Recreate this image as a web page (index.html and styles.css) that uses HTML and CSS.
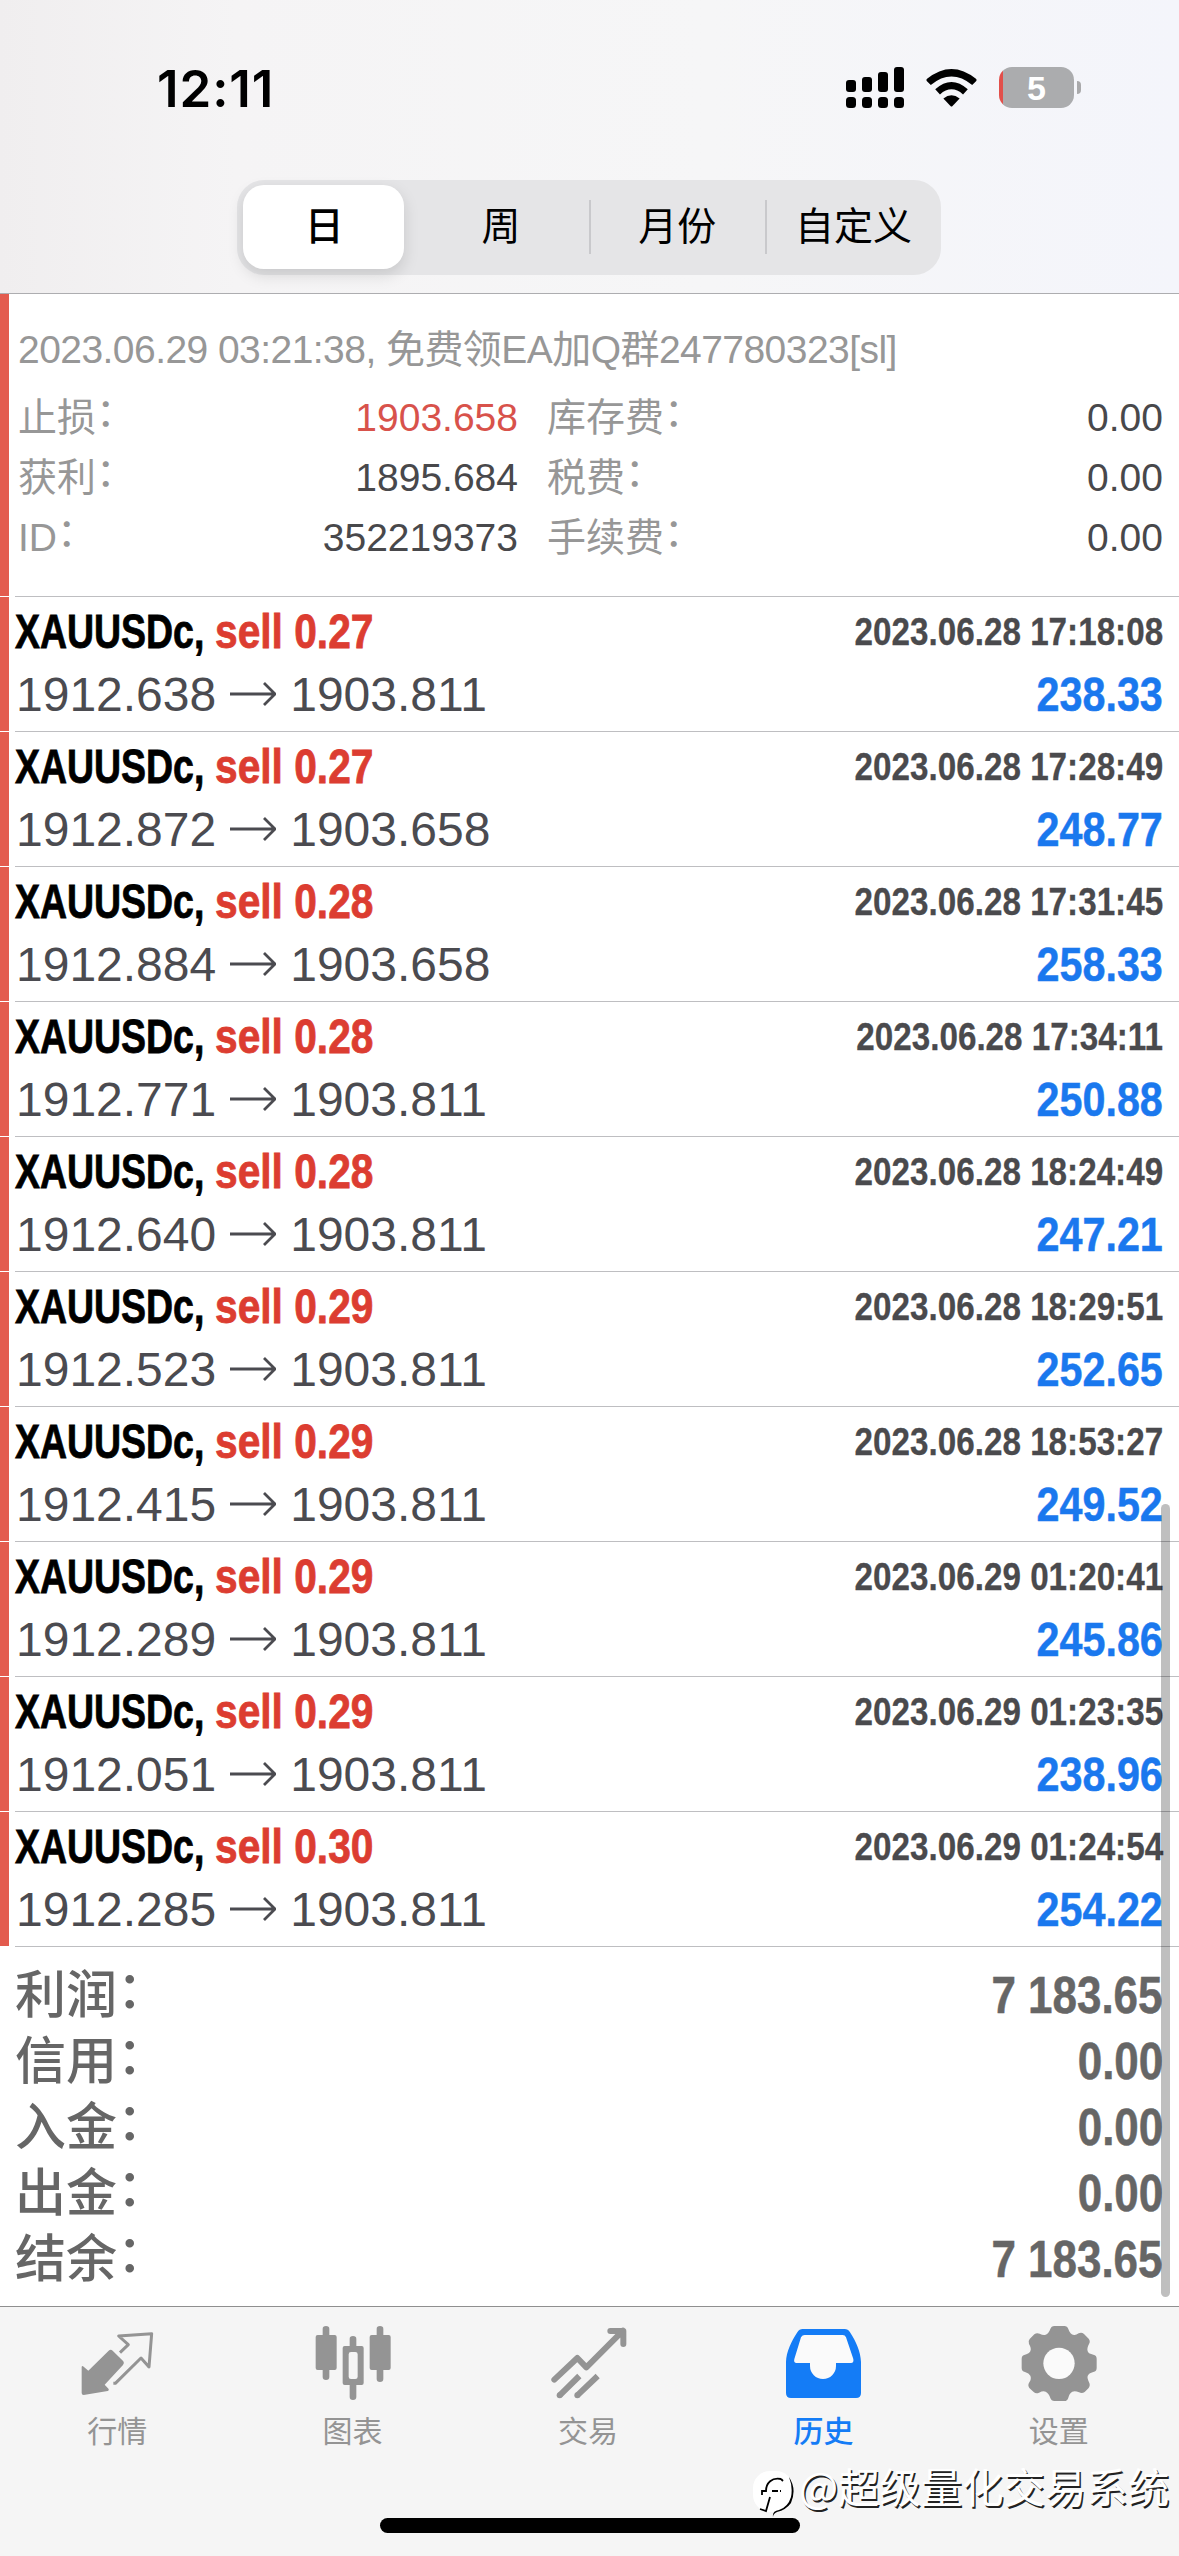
FILE: index.html
```html
<!DOCTYPE html>
<html lang="zh-CN">
<head>
<meta charset="utf-8">
<title>历史</title>
<link rel="stylesheet" href="styles.css">
</head>
<body>
<div class="screen">
  <header class="top">
    <div class="status">
      <div class="clock">12:11</div>
      <div class="status-icons">
        <svg class="signal" viewBox="0 0 58 41"><g><rect x="0" y="13" width="10" height="12" rx="3"/><rect x="16" y="10" width="10" height="15" rx="3"/><rect x="32" y="5" width="10" height="20" rx="3"/><rect x="48" y="0" width="10" height="25" rx="3"/><rect x="0" y="30" width="10" height="11" rx="3.5"/><rect x="16" y="30" width="10" height="11" rx="3.5"/><rect x="32" y="30" width="10" height="11" rx="3.5"/><rect x="48" y="30" width="10" height="11" rx="3.5"/></g></svg>
        <svg class="wifi" viewBox="0 0 150 112"><path d="M2 35Q0 32 3 29Q75 -29 147 29Q150 32 148 35L136 47Q75 -3 14 47Z"/><path d="M27 60Q75 17 123 60L109 75Q75 45 41 75Z"/><path d="M51 87Q75 68 99 87L78 109Q75 112 72 109Z"/></svg>
        <div class="battery"><span class="battery-body">5</span><span class="battery-tip"></span></div>
      </div>
    </div>
    <nav class="segments">
      <div class="segment selected">日</div>
      <div class="segment">周</div>
      <div class="segment divided">月份</div>
      <div class="segment divided">自定义</div>
    </nav>
  </header>

  <main class="content">
    <section class="detail">
      <div class="detail-title">2023.06.29 03:21:38, 免费领EA加Q群247780323[sl]</div>
      <div class="detail-grid">
        <span>止损<i class="colon">：</i></span><b class="loss">1903.658</b><span class="second">库存费<i class="colon">：</i></span><b>0.00</b>
        <span>获利<i class="colon">：</i></span><b>1895.684</b><span class="second">税费<i class="colon">：</i></span><b>0.00</b>
        <span>ID<i class="colon">：</i></span><b>352219373</b><span class="second">手续费<i class="colon">：</i></span><b>0.00</b>
      </div>
    </section>

    <article class="deal"><div class="line"><span class="symbol"><span>XAUUSDc,</span></span><span class="side">sell 0.27</span><time>2023.06.28 17:18:08</time></div><div class="line"><span class="price">1912.638</span><svg class="arrow" viewBox="0 0 46 24"><path d="M0 12H45M34 1L45 12L34 23"/></svg><span class="price">1903.811</span><span class="profit">238.33</span></div></article>
    <article class="deal"><div class="line"><span class="symbol"><span>XAUUSDc,</span></span><span class="side">sell 0.27</span><time>2023.06.28 17:28:49</time></div><div class="line"><span class="price">1912.872</span><svg class="arrow" viewBox="0 0 46 24"><path d="M0 12H45M34 1L45 12L34 23"/></svg><span class="price">1903.658</span><span class="profit">248.77</span></div></article>
    <article class="deal"><div class="line"><span class="symbol"><span>XAUUSDc,</span></span><span class="side">sell 0.28</span><time>2023.06.28 17:31:45</time></div><div class="line"><span class="price">1912.884</span><svg class="arrow" viewBox="0 0 46 24"><path d="M0 12H45M34 1L45 12L34 23"/></svg><span class="price">1903.658</span><span class="profit">258.33</span></div></article>
    <article class="deal"><div class="line"><span class="symbol"><span>XAUUSDc,</span></span><span class="side">sell 0.28</span><time>2023.06.28 17:34:11</time></div><div class="line"><span class="price">1912.771</span><svg class="arrow" viewBox="0 0 46 24"><path d="M0 12H45M34 1L45 12L34 23"/></svg><span class="price">1903.811</span><span class="profit">250.88</span></div></article>
    <article class="deal"><div class="line"><span class="symbol"><span>XAUUSDc,</span></span><span class="side">sell 0.28</span><time>2023.06.28 18:24:49</time></div><div class="line"><span class="price">1912.640</span><svg class="arrow" viewBox="0 0 46 24"><path d="M0 12H45M34 1L45 12L34 23"/></svg><span class="price">1903.811</span><span class="profit">247.21</span></div></article>
    <article class="deal"><div class="line"><span class="symbol"><span>XAUUSDc,</span></span><span class="side">sell 0.29</span><time>2023.06.28 18:29:51</time></div><div class="line"><span class="price">1912.523</span><svg class="arrow" viewBox="0 0 46 24"><path d="M0 12H45M34 1L45 12L34 23"/></svg><span class="price">1903.811</span><span class="profit">252.65</span></div></article>
    <article class="deal"><div class="line"><span class="symbol"><span>XAUUSDc,</span></span><span class="side">sell 0.29</span><time>2023.06.28 18:53:27</time></div><div class="line"><span class="price">1912.415</span><svg class="arrow" viewBox="0 0 46 24"><path d="M0 12H45M34 1L45 12L34 23"/></svg><span class="price">1903.811</span><span class="profit">249.52</span></div></article>
    <article class="deal"><div class="line"><span class="symbol"><span>XAUUSDc,</span></span><span class="side">sell 0.29</span><time>2023.06.29 01:20:41</time></div><div class="line"><span class="price">1912.289</span><svg class="arrow" viewBox="0 0 46 24"><path d="M0 12H45M34 1L45 12L34 23"/></svg><span class="price">1903.811</span><span class="profit">245.86</span></div></article>
    <article class="deal"><div class="line"><span class="symbol"><span>XAUUSDc,</span></span><span class="side">sell 0.29</span><time>2023.06.29 01:23:35</time></div><div class="line"><span class="price">1912.051</span><svg class="arrow" viewBox="0 0 46 24"><path d="M0 12H45M34 1L45 12L34 23"/></svg><span class="price">1903.811</span><span class="profit">238.96</span></div></article>
    <article class="deal"><div class="line"><span class="symbol"><span>XAUUSDc,</span></span><span class="side">sell 0.30</span><time>2023.06.29 01:24:54</time></div><div class="line"><span class="price">1912.285</span><svg class="arrow" viewBox="0 0 46 24"><path d="M0 12H45M34 1L45 12L34 23"/></svg><span class="price">1903.811</span><span class="profit">254.22</span></div></article>

    <section class="summary">
      <div><span>利润<i class="colon">：</i></span><b>7 183.65</b></div>
      <div><span>信用<i class="colon">：</i></span><b>0.00</b></div>
      <div><span>入金<i class="colon">：</i></span><b>0.00</b></div>
      <div><span>出金<i class="colon">：</i></span><b>0.00</b></div>
      <div><span>结余<i class="colon">：</i></span><b>7 183.65</b></div>
    </section>
    <div class="scrollbar"></div>
  </main>

  <footer class="tabbar">
    <nav class="tabs">
      <a class="tab"><svg viewBox="53 66 240 240"><path d="M145 152Q151 147 157 152L189 184Q193 189 188 195L133 254L145 267Q147 271 142 273L70 285Q64 285 64 279V201Q65 196 70 200L84 212Z"/><path class="stroke" stroke-width="9" stroke-linejoin="round" d="M179 158L204 134L175 108L274 101L266 201L242 174L165 250H159"/></svg><span>行情</span></a>
      <a class="tab"><svg viewBox="757 66 240 240"><path d="M786 86a10 8 0 0 1 20 0V105H822Q828 105 828 111V204Q828 210 822 210H806V231a10 9 0 0 1-20 0V210H771Q765 210 765 204V111Q765 105 771 105H786ZM948 86a10 8 0 0 1 20 0V105H984Q990 105 990 111V204Q990 210 984 210H968V237a10 9 0 0 1-20 0V210H933Q927 210 927 204V111Q927 105 933 105H948Z"/><path fill-rule="evenodd" d="M867 116a10 8 0 0 1 20 0V138H903Q909 138 909 144V249Q909 255 903 255H887V291a10 9 0 0 1-20 0V255H852Q846 255 846 249V144Q846 138 852 138H867ZM871 156Q864 156 864 163V230Q864 237 871 237H884Q891 237 891 230V163Q891 156 884 156Z"/></svg><span>图表</span></a>
      <a class="tab"><svg viewBox="56 66 240 240"><path class="stroke" stroke-width="18" stroke-linejoin="round" stroke-linecap="round" d="M72 239L141 174L168 202L278 92M240 93H279V132"/><path class="stroke" stroke-width="18" d="M88 286L147 228M141 286L202 228"/><circle cx="88" cy="286" r="9"/><circle cx="141" cy="286" r="9"/></svg><span>交易</span></a>
      <a class="tab active"><svg viewBox="762 66 240 240"><path d="M802 97Q808 87 818 87H944Q954 87 960 97C978 124 992 156 993 186V279Q993 294 978 294H783Q768 294 768 279V186C769 156 784 124 802 97Z"/><path fill="#fafafa" d="M824 105H938Q945 105 948 112L970 177Q972 189 963 189H918V198A39 39 0 0 1 840 198V189H800Q790 189 793 177L813 112Q817 105 824 105Z"/></svg><span>历史</span></a>
      <a class="tab"><svg viewBox="838 66 240 240"><path d="M932 87Q935 78 944 78H974Q983 78 986 87Q991 104 1003 105Q1009 106 1017 100Q1026 96 1033 102L1047 116Q1053 123 1048 132Q1041 145 1044 154Q1047 162 1061 164Q1071 166 1071 176V204Q1071 214 1061 216Q1047 219 1044 228Q1042 234 1048 247Q1053 256 1047 264L1035 276Q1027 282 1018 277Q1006 271 998 275Q989 279 986 293Q983 303 974 303H944Q935 303 932 294Q927 279 918 275Q911 271 898 278Q889 282 882 276L869 264Q863 256 869 247Q876 236 872 227Q868 219 856 216Q846 214 846 204V176Q846 166 856 164Q869 161 872 154Q876 145 868 132Q864 124 870 117L884 103Q891 97 900 101Q911 107 918 104Q927 101 932 87Z"/><circle cx="958" cy="190" r="47" fill="#fafafa"/></svg><span>设置</span></a>
    </nav>
    <div class="home-indicator"></div>
    <div class="watermark"><svg viewBox="0 0 44 48"><rect x="1" y="0" width="40" height="41" rx="17" fill="#fff"/><path fill="none" stroke="#000" stroke-width="1.8" d="M10 24V20H14C14 12 20 6 29 8M29 8L31 10M20 20H26M18 26L14 40L8 38M28 20H29"/><path fill="#000" d="M37 6Q45 18 39 32Q34 39 25 41Q21 43 21 46Q20 40 27 39Q36 36 39 26Q41 16 37 6Z"/></svg><span>@超级量化交易系统</span></div>
  </footer>
</div>
</body>
</html>
```
FILE: styles.css
```css
* { box-sizing: border-box; }
body { margin: 0; background: #fff; }
.screen {
  width: 1179px;
  height: 2556px;
  display: flex;
  flex-direction: column;
  overflow: hidden;
  font-family: "Liberation Sans", "Noto Sans CJK SC", sans-serif;
  color: #4a4a4d;
}

/* Status bar and period switch */
.top {
  height: 294px;
  border-bottom: 1px solid #adadb0;
  background: linear-gradient(90deg, #f0eeef 0, #f5f4f5 20%, #f6f6f7 60%, #f4f5fb 100%);
}
.status {
  height: 180px;
  padding: 63px 98px 0 157px;
  display: flex;
  justify-content: space-between;
  align-items: flex-start;
}
.clock {
  font: 600 51px/52px Inter, sans-serif;
  letter-spacing: 0.9px;
  color: #000;
}
.status-icons { display: flex; padding-top: 4px; }
.signal { width: 58px; height: 41px; }
.wifi { width: 51px; height: 38px; margin: 2px 22px 0; }
.battery { display: flex; align-items: center; gap: 3px; }
.battery-body {
  width: 75px;
  height: 41px;
  border-radius: 13px;
  background: linear-gradient(90deg, #e2504b 4px, #abacae 4px);
  color: #fff;
  font: 700 34px/42px "Liberation Sans", sans-serif;
  text-align: center;
}
.battery-tip { width: 4px; height: 13px; border-radius: 0 4px 4px 0; background: #a9a9ab; }
.segments {
  width: 704px;
  height: 95px;
  margin-left: 237px;
  padding: 5px 0 6px 6px;
  display: flex;
  border-radius: 27px;
  background: #e5e5e7;
}
.segment {
  width: 177px;
  display: flex;
  align-items: center;
  justify-content: center;
  font-size: 39px;
  line-height: 56px;
  padding-left: 1px;
  color: #000;
}
.segment.selected {
  width: 162px;
  margin-right: 8px;
  border-radius: 21px;
  background: #fff;
  font-weight: 500;
  box-shadow: 0 6px 16px rgba(0, 0, 0, .13);
}
.segment.divided {
  background: linear-gradient(#c9c9cc, #c9c9cc) 0 center / 2px 54px no-repeat;
}

/* Expanded position */
.content { position: relative; height: 2012px; }
.detail {
  height: 302px;
  padding: 28px 16px 0 18px;
  background: linear-gradient(#e35b4e, #e35b4e) 0 0 / 9px 100% no-repeat;
  font-size: 39px;
  color: #979797;
}
.detail-title { height: 66px; line-height: 56px; letter-spacing: -0.55px; white-space: nowrap; }
.detail-grid {
  display: grid;
  grid-template-columns: 200px 300px 229px 1fr;
  grid-auto-rows: 60px;
  line-height: 60px;
}
.detail-grid b { font-weight: 400; color: #48484b; text-align: right; }
.detail-grid .loss { color: #d8524b; }
.detail-grid .second { padding-left: 29px; }
.colon { font-style: normal; position: relative; top: -5px; }

/* Deal rows */
.deal {
  height: 135px;
  padding: 12px 16px 0 15px;
  background:
    linear-gradient(#bebec1, #bebec1) 15px 0 / 100% 1px no-repeat,
    linear-gradient(#e35b4e, #e35b4e) 0 1px / 9px 134px no-repeat;
}
.line { height: 63px; display: flex; align-items: center; white-space: pre; line-height: 48px; font-size: 48px; }
.deal .line:first-child { height: 48px; margin-bottom: 7px; }
.symbol { width: 200px; font-weight: 700; color: #000; }
.symbol span { display: inline-block; transform: scaleX(.78); transform-origin: left; -webkit-text-stroke: .8px; }
.side { width: 190px; font-weight: 700; color: #dc3d31; transform: scaleX(.848); transform-origin: left; -webkit-text-stroke: .8px; }
time { margin-left: auto; font-size: 39px; font-weight: 700; transform: scaleX(.852); transform-origin: right; -webkit-text-stroke: .3px; }
.price { letter-spacing: 0; margin-left: 1px; color: #4b4b50; }
.arrow { width: 46px; height: 24px; margin: 0 13px 2px 14px; fill: none; stroke: #4b4b50; stroke-width: 2.8; }
.profit { margin-left: auto; font-weight: 700; color: #1a78ee; transform: scaleX(.86); transform-origin: right; -webkit-text-stroke: .5px; }

/* Totals */
.summary { padding: 16px 16px 0 15px; background: linear-gradient(#bebec1, #bebec1) 15px 0 / 100% 1px no-repeat; color: #666; font-size: 51px; }
.summary div { height: 66px; display: flex; justify-content: space-between; align-items: center; line-height: 66px; padding-top: 1px; }
.summary span { font-weight: 500; }
.summary b { transform: scaleX(.862); transform-origin: right; -webkit-text-stroke: .5px; }
.scrollbar { position: absolute; left: 1161px; top: 1210px; width: 9px; height: 793px; border-radius: 5px; background: rgba(0, 0, 0, .25); }

/* Tab bar */
.tabbar { position: relative; height: 250px; border-top: 1px solid #8f8f8f; background: #f5f5f5; }
.tabs { width: 1177px; padding-top: 15px; display: flex; }
.tab { flex: 1; display: flex; flex-direction: column; align-items: center; color: #949494; font-size: 30px; line-height: 40px; }
.tab svg { width: 80px; height: 80px; fill: currentColor; margin-bottom: 10px; }
.tab span { margin-right: 1px; }
.tab .stroke { fill: none; stroke: currentColor; }
.tab.active { color: #147cf6; }
.tab.active span { font-weight: 500; }
.home-indicator { position: absolute; left: 380px; top: 211px; width: 420px; height: 15px; border-radius: 8px; background: #000; }
.watermark {
  position: absolute;
  left: 752px;
  top: 164px;
  display: flex;
  font-family: "Noto Sans CJK SC", sans-serif;
  font-size: 41.4px;
  line-height: 28px;
  color: #fff;
  white-space: nowrap;
  text-shadow: 1.5px 1.5px 0 #222;
}
.watermark svg { width: 44px; height: 48px; margin-right: 3px; }
```
